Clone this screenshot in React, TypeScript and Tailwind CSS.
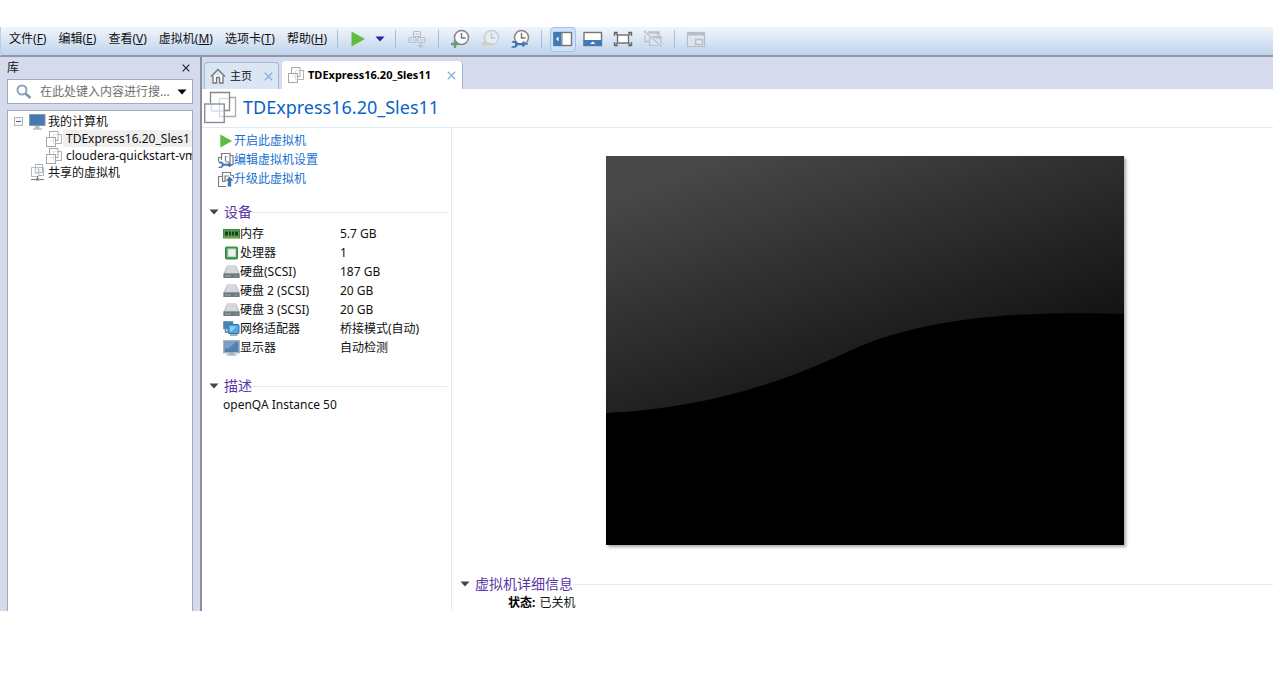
import type { ReactNode } from "react";

const menus = [
  { label: "文件", hotkey: "F" },
  { label: "编辑", hotkey: "E" },
  { label: "查看", hotkey: "V" },
  { label: "虚拟机", hotkey: "M" },
  { label: "选项卡", hotkey: "T" },
  { label: "帮助", hotkey: "H" },
];

/* ---------- Icons ---------- */

function PlayIcon({ size = 16 }: { size?: number }) {
  return (
    <svg width={size} height={size} viewBox="0 0 16 16">
      <path d="M1.5 0.5 15 8 1.5 15.5Z" fill="#5ebd3e" />
    </svg>
  );
}

function CaretIcon({ color }: { color: string }) {
  return (
    <svg width="10" height="6" viewBox="0 0 10 6">
      <path d="M0.5 0.5h9L5 5.5Z" fill={color} />
    </svg>
  );
}

function CloseIcon({ color, size = 9 }: { color: string; size?: number }) {
  return (
    <svg width={size} height={size} viewBox="0 0 9 9">
      <path d="M0.8 0.8 8.2 8.2M8.2 0.8 0.8 8.2" stroke={color} strokeWidth="1.3" fill="none" />
    </svg>
  );
}

// Three overlapping squares, used for every virtual machine
function VmIcon() {
  return (
    <svg width="16" height="16" viewBox="0 0 16 16" fill="none" className="shrink-0">
      <path d="M12 3.5h3.500v9H10" stroke="#adb1b5" />
      <path d="M3.500 6V0.500h8.500V9.500H10" stroke="#a6a6a6" />
      <rect x="0.500" y="6.500" width="9" height="9" stroke="#a6a6a6" />
      <path d="M7.500 6V3.500h4M4 9.500h5M7.500 7v5.500h2" stroke="#d5e4f1" />
    </svg>
  );
}

function LargeVmIcon() {
  return (
    <svg width="33" height="33" viewBox="0 0 33 33" fill="none" className="shrink-0">
      <path d="M15.500 13V7.500h10M7.500 20h12.500M15.500 13v12.500h4.500M7.500 13v7.500" stroke="#cfe0ef" strokeWidth="1.400" />
      <path d="M26 6.500h5.500v19H21" stroke="#a9adb1" strokeWidth="1.300" />
      <path d="M6.500 12V1.500h19V19.500H21" stroke="#858585" strokeWidth="1.300" />
      <rect x="0.750" y="13" width="19.500" height="18.500" stroke="#858585" strokeWidth="1.300" />
    </svg>
  );
}

function SendKeysIcon() {
  return (
    <svg width="18" height="19" viewBox="0 0 18 19" fill="none" stroke="#b5bfca" strokeWidth="1.2">
      <rect x="5.500" y="1.500" width="7" height="5" rx="1" />
      <rect x="1" y="7.500" width="7" height="5" rx="1" />
      <rect x="10" y="7.500" width="7" height="5" rx="1" />
      <path d="M7.500 4h3M3 10h3M12 10h3" />
      <path d="M12.500 12v5.500M10 15l2.500 2.500L15 15" />
    </svg>
  );
}

function ClockIcon({ faded = false, children }: { faded?: boolean; children: ReactNode }) {
  return (
    <svg width="20" height="20" viewBox="0 0 20 20" fill="none">
      <circle
        cx="11.500"
        cy="8.500"
        r="7"
        fill={faded ? "#e6edf5" : "#fbfbfb"}
        stroke={faded ? "#c9cfd6" : "#858585"}
        strokeWidth="1.500"
      />
      <path d="M11.500 4v5H15.500" stroke={faded ? "#c0c7cf" : "#757575"} strokeWidth="1.400" />
      {children}
    </svg>
  );
}

function SidebarPaneIcon() {
  return (
    <svg width="20" height="16" viewBox="0 0 20 16">
      <rect x="1" y="1.500" width="17.500" height="13" fill="#fff" stroke="#767676" strokeWidth="1.400" />
      <path d="M0.500 1h8v14h-8z" fill="#417bb5" />
      <path d="M5.500 5.500v5L3 8Z" fill="#fff" />
      <path d="M9 1v14" stroke="#767676" />
    </svg>
  );
}

function ThumbnailPaneIcon() {
  return (
    <svg width="20" height="16" viewBox="0 0 20 16">
      <rect x="1" y="1.500" width="17.500" height="13" fill="#fff" stroke="#767676" strokeWidth="1.400" />
      <path d="M0.500 9h18.500v6H0.500z" fill="#417bb5" />
      <path d="M7 13h5.500l-2.750-2.500Z" fill="#fff" />
    </svg>
  );
}

function FullScreenIcon() {
  return (
    <svg width="20" height="16" viewBox="0 0 20 16" fill="none" stroke="#6e6e6e" strokeWidth="1.400">
      <rect x="4.500" y="4" width="11" height="8" fill="#fff" />
      <path d="M1.500 5V1.500H5M15 1.500h3.500V5M18.500 11v3.500H15M5 14.500H1.500V11M1.500 1.500l3 2.500M18.500 1.500l-3 2.500M18.500 14.500l-3-2.500M1.500 14.500l3-2.500" />
    </svg>
  );
}

function UnityIcon() {
  return (
    <svg width="20" height="18" viewBox="0 0 20 18" fill="none" stroke="#b9c2cc" strokeWidth="1.300">
      <path d="M5 2.500h10.500v3" strokeWidth="2.500" />
      <path d="M2 5v6.500h5" />
      <rect x="6.500" y="6.500" width="11.500" height="9" fill="#dbe5ef" />
      <path d="M6.500 7.500h11.500" strokeWidth="2" />
      <path d="M1 1l18 16" stroke="#dfe8f2" strokeWidth="3" />
      <path d="M1 1l18 16" />
    </svg>
  );
}

function ConsoleViewIcon() {
  return (
    <svg width="20" height="17" viewBox="0 0 20 17" fill="none" stroke="#b5bec9">
      <rect x="1.500" y="1.500" width="17" height="14" fill="#e1e9f2" strokeWidth="1.200" />
      <path d="M1.500 3h17" strokeWidth="3" />
      <path d="M3.500 7.500H7M3.500 10H7M3.500 12.500H7" stroke="#d8d6c6" />
      <rect x="9.500" y="8.500" width="7" height="5" strokeWidth="1.500" />
    </svg>
  );
}

function SearchIcon() {
  return (
    <svg width="16" height="16" viewBox="0 0 16 16" fill="none" className="shrink-0">
      <circle cx="6" cy="6" r="4.500" stroke="#8aa3c0" strokeWidth="2" />
      <path d="M9.500 9.500l5 4.500" stroke="#7d95b3" strokeWidth="2.600" />
    </svg>
  );
}

function ComputerIcon() {
  return (
    <svg width="17" height="16" viewBox="0 0 17 16" className="shrink-0">
      <rect x="0.500" y="0.500" width="15.500" height="11" fill="#437bb4" stroke="#8f979e" />
      <path d="M6 12h4.500v2.500H6z" fill="#b9bdc1" />
      <path d="M4 15h9" stroke="#9b9b9b" />
    </svg>
  );
}

function SharedVmsIcon() {
  return (
    <svg width="16" height="17" viewBox="0 0 16 17" fill="none" className="shrink-0">
      <rect x="5.500" y="0.500" width="7" height="8" stroke="#b3b3b3" />
      <path d="M1.500 3.500h7v9h-7zM8.500 3.500h5v8h-5" stroke="#b3b8bd" />
      <path d="M5 5h5v5H5z" stroke="#cfe0ef" />
      <path d="M7.500 12v3M1 15.500h4M10 15.500h4" stroke="#777" />
      <path d="M5.500 14.500h4v2h-4z" fill="#777" />
    </svg>
  );
}

function HomeIcon() {
  return (
    <svg width="16" height="16" viewBox="0 0 16 16" fill="none" stroke="#757575" strokeWidth="1.300">
      <path d="M1 8.500 8 1.500l7 7" />
      <path d="M3 7.500V15h3.500V9.500h3V15H13V7.500" fill="#fff" />
    </svg>
  );
}

function EditVmIcon() {
  return (
    <svg width="17" height="16" viewBox="0 0 17 16" fill="none">
      <path d="M4.500 8V1.500h8.500M13 1v9H9M13 3.500h3v9h-3M4.500 5.500H1.500V9M8.500 4v5.500" stroke="#7b7b7b" strokeWidth="1.200" />
      <path d="M9 4.500h4" stroke="#bcd0e2" />
      <path
        d="M1 9.500h3.500c1 .5 1.800 1.200 2.200 2.300H11c.5-1 1.500-1.600 2.500-1.600v2.200h2v1.400h-2V15c-1.200 0-2.200-.400-2.700-1.300H6.700c-.4 1-1.200 1.800-2.200 2.300H1l1.500-1.500h2v-3h-2Z"
        fill="#3f78b3"
      />
    </svg>
  );
}

function UpgradeVmIcon() {
  return (
    <svg width="16" height="16" viewBox="0 0 16 16" fill="none">
      <path d="M4.500 6V1.500h8V4M12.500 4.500h3v3M4.500 5.500h-4v10H8M4.500 5.500v5H7V5h4" stroke="#7b7b7b" strokeWidth="1.200" />
      <path d="M11.500 5.500 7.500 9.800h2.300V15.500h3.400V9.800h2.300Z" fill="#3f78b3" />
    </svg>
  );
}

function MemoryIcon() {
  return (
    <svg width="17" height="16" viewBox="0 0 17 16">
      <rect x="0.500" y="3.500" width="16" height="8.500" fill="#55a04c" stroke="#3f8d45" />
      <path d="M2 5.500h3v4H2zM6 5.500h2v4H6zM9 5.500h2v4H9zM12 5.500h3v4h-3z" fill="#26382a" />
      <path d="M1.500 12h14" stroke="#d9b65c" strokeDasharray="2 1" />
    </svg>
  );
}

function CpuIcon() {
  return (
    <svg width="17" height="16" viewBox="0 0 17 16">
      <rect x="2.500" y="2" width="12" height="12" rx="1" fill="#3fa052" stroke="#2e8a43" />
      <rect x="5" y="4" width="7.500" height="7.500" fill="#eef1ee" stroke="#c4d6c7" />
    </svg>
  );
}

function DiskIcon() {
  return (
    <svg width="17" height="16" viewBox="0 0 17 16">
      <path d="M4 1.500h9L16.500 9.500v4.500H0.500V9.500Z" fill="#b5babf" />
      <path d="M4.500 2h8l2.500 7H2Z" fill="#d5d9dd" />
      <path d="M0.500 9.500h16v4.500H0.500z" fill="#70777e" />
      <path d="M2 12h6" stroke="#a9afb5" />
      <path d="M11.500 12h3" stroke="#5fb661" strokeWidth="1.500" />
    </svg>
  );
}

function NetworkIcon() {
  return (
    <svg width="17" height="16" viewBox="0 0 17 16">
      <rect x="0.750" y="0.750" width="9" height="7" fill="#3f86c6" stroke="#5f7f9d" />
      <path d="M2.500 8v3h3" fill="none" stroke="#6c8298" strokeWidth="1.500" />
      <rect x="5" y="3.500" width="11" height="9" rx="1" fill="#49a8ea" stroke="#476f96" />
      <path d="M7 5.500h6.500l-5 5H7z" fill="#90d0f7" />
      <path d="M7 14h7.500" stroke="#8a96a3" strokeWidth="1.500" />
    </svg>
  );
}

function DisplayIcon() {
  return (
    <svg width="17" height="16" viewBox="0 0 17 16">
      <rect x="0.750" y="0.750" width="15.500" height="12" fill="#5480ae" stroke="#a9b5c1" strokeWidth="1.500" />
      <path d="M1.500 1.500h12l-8 7h-4z" fill="#7ba0c8" />
      <path d="M6 13h5v1.500H6z" fill="#9eaab5" />
      <path d="M3.500 15h10" stroke="#8b98a6" />
    </svg>
  );
}

/* ---------- Data ---------- */

const devices = [
  { name: "内存", value: "5.7 GB", icon: <MemoryIcon /> },
  { name: "处理器", value: "1", icon: <CpuIcon /> },
  { name: "硬盘(SCSI)", value: "187 GB", icon: <DiskIcon /> },
  { name: "硬盘 2 (SCSI)", value: "20 GB", icon: <DiskIcon /> },
  { name: "硬盘 3 (SCSI)", value: "20 GB", icon: <DiskIcon /> },
  { name: "网络适配器", value: "桥接模式(自动)", icon: <NetworkIcon /> },
  { name: "显示器", value: "自动检测", icon: <DisplayIcon /> },
];

const actions = [
  { label: "开启此虚拟机", icon: <PlayIcon size={14} /> },
  { label: "编辑虚拟机设置", icon: <EditVmIcon /> },
  { label: "升级此虚拟机", icon: <UpgradeVmIcon /> },
];

/* ---------- Pieces ---------- */

function ToolButton({ label, active, children }: { label: string; active?: boolean; children: ReactNode }) {
  return (
    <span className="w-[30px] flex justify-center">
      <button
        type="button"
        aria-label={label}
        className={
          active
            ? "w-[26px] h-[25px] flex items-center justify-center rounded-sm border border-[#9fc3ec] bg-[#cfe2f8]"
            : "w-[26px] h-[25px] flex items-center justify-center"
        }
      >
        {children}
      </button>
    </span>
  );
}

function Separator() {
  return <span className="w-px h-[18px] mx-1.5 bg-[#a3bedb]" />;
}

function SectionTitle({ children }: { children: ReactNode }) {
  return (
    <h2 className="flex items-center h-5 text-sm text-[#5a35a5]">
      <button type="button" className="flex items-center gap-[5px]">
        <CaretIcon color="#444444" />
        {children}
      </button>
      <span className="flex-1 h-px bg-[#e8e8e8]" />
    </h2>
  );
}

function MenuBar() {
  return (
    <header className="flex items-center h-[30px] shrink-0 border-l border-b-2 border-l-[#b5d0ea] border-b-[#9399a3] bg-linear-to-b from-[#f1f6fb] to-[#bfd3ec] pb-1">
      <nav className="flex items-center gap-3 w-[330px] pl-2">
        {menus.map((menu) => (
          <button key={menu.hotkey} type="button" className="whitespace-nowrap">
            {menu.label}(<u>{menu.hotkey}</u>)
          </button>
        ))}
      </nav>
      <Separator />
      <button type="button" aria-label="开启" className="w-[27px] flex justify-center">
        <PlayIcon />
      </button>
      <button type="button" aria-label="电源选项" className="w-[18px] flex justify-center">
        <CaretIcon color="#1b2aa0" />
      </button>
      <Separator />
      <ToolButton label="发送按键">
        <SendKeysIcon />
      </ToolButton>
      <Separator />
      <ToolButton label="拍摄快照">
        <ClockIcon>
          <path d="M5 11v8M1 15h8" stroke="#6f9a7c" strokeWidth="2.400" />
        </ClockIcon>
      </ToolButton>
      <ToolButton label="恢复快照">
        <ClockIcon faded>
          <path d="M1 15l4-3.500v2.300h7v2.400H5v2.300Z" fill="#dccab8" />
        </ClockIcon>
      </ToolButton>
      <ToolButton label="管理快照">
        <ClockIcon>
          <path
            d="M2 12h3.500c1 .4 1.800 1 2.200 2h4c.6-1.200 1.800-1.800 3-1.800v2h3.300v1.600h-3.300v2c-1.300 0-2.500-.600-3-1.600h-4c-.4 1.200-1.200 2-2.200 2.500H1l1.500-1.700H5v-3H2.500Z"
            fill="#3f78b3"
          />
        </ClockIcon>
      </ToolButton>
      <Separator />
      <ToolButton label="显示库" active>
        <SidebarPaneIcon />
      </ToolButton>
      <ToolButton label="缩略图栏">
        <ThumbnailPaneIcon />
      </ToolButton>
      <ToolButton label="全屏">
        <FullScreenIcon />
      </ToolButton>
      <ToolButton label="Unity">
        <UnityIcon />
      </ToolButton>
      <Separator />
      <ToolButton label="控制台视图">
        <ConsoleViewIcon />
      </ToolButton>
    </header>
  );
}

function Library() {
  return (
    <aside className="flex flex-col w-[200px] shrink-0 px-[7px] bg-[#d5daed]">
      <div className="flex items-center justify-between h-[22px] pr-[3px]">
        <h2>库</h2>
        <button type="button" aria-label="关闭库">
          <CloseIcon color="#222222" size={8} />
        </button>
      </div>
      <div className="flex items-center h-[25px] shrink-0 border border-[#a4aab8] bg-white pl-2 pr-[5px]">
        <SearchIcon />
        <input
          type="text"
          aria-label="搜索"
          placeholder="在此处键入内容进行搜..."
          className="flex-1 min-w-0 pl-2 outline-none placeholder:text-[#6e6e6e]"
        />
        <button type="button" aria-label="筛选">
          <CaretIcon color="#000000" />
        </button>
      </div>
      <div className="flex-1 min-h-0 mt-1.5 border border-b-0 border-[#a4aab8] bg-white overflow-hidden">
        <ul className="pt-0.5">
          <li>
            <div className="flex items-center h-[17px] pl-1.5">
              <button
                type="button"
                aria-label="折叠"
                className="w-[9px] h-[9px] mr-1.5 flex items-center justify-center border border-[#b5b5b5] bg-[#f6f6f6]"
              >
                <span className="w-[5px] h-px bg-[#4a62a8]" />
              </button>
              <ComputerIcon />
              <span className="pl-0.5">我的计算机</span>
            </div>
            <ul>
              <li className="flex items-center gap-px h-[17px] pl-[38px]">
                <VmIcon />
                <span className="flex-1 pl-[3px] leading-[17px] whitespace-nowrap bg-[#efefef]">
                  TDExpress16.20_Sles1
                </span>
              </li>
              <li className="flex items-center gap-px h-[17px] pl-[38px]">
                <VmIcon />
                <span className="flex-1 pl-[3px] leading-[17px] whitespace-nowrap overflow-hidden">
                  cloudera-quickstart-vm
                </span>
              </li>
            </ul>
          </li>
          <li className="flex items-center h-[17px] pl-[22px]">
            <SharedVmsIcon />
            <span className="pl-0.5">共享的虚拟机</span>
          </li>
        </ul>
      </div>
    </aside>
  );
}

function Tabs() {
  return (
    <div className="flex items-end gap-[3px] h-8 shrink-0 pl-0.5 bg-[#d5daed]">
      <div className="flex items-center h-[27px] px-[5px] rounded-t-sm border border-b-0 border-[#9dbbd8] bg-[#dae6f4] text-[11px]">
        <button type="button" className="flex items-center gap-1">
          <HomeIcon />
          主页
        </button>
        <button type="button" aria-label="关闭主页" className="ml-3">
          <CloseIcon color="#8db0d2" />
        </button>
      </div>
      <div className="flex items-center h-7 px-1.5 rounded-t-sm border-r border-[#9dbbd8] bg-white">
        <button type="button" className="flex items-center gap-1 text-[11px] font-bold text-black">
          <VmIcon />
          TDExpress16.20_Sles11
        </button>
        <button type="button" aria-label="关闭标签页" className="ml-4">
          <CloseIcon color="#8db0d2" />
        </button>
      </div>
    </div>
  );
}

function Preview() {
  return (
    <svg viewBox="0 0 518 389" className="w-[518px] mx-auto shadow-[2px_2px_3px_rgba(0,0,0,0.35)]">
      <defs>
        <linearGradient id="glass" gradientUnits="userSpaceOnUse" x1="14" y1="38" x2="111" y2="305">
          <stop offset="0" stopColor="#484848" />
          <stop offset="1" stopColor="#131313" />
        </linearGradient>
      </defs>
      <rect width="518" height="389" fill="url(#glass)" />
      <path d="M0 257C90 253 170 230 239 197S400 154 518 158V389H0Z" fill="#000" />
    </svg>
  );
}

export default function App() {
  return (
    <div className="flex flex-col h-screen pt-[27px] pb-[69px] pr-[7px] bg-white text-xs text-[#111111] font-['Noto_Sans','Noto_Sans_CJK_SC',sans-serif]">
      <MenuBar />
      <div className="flex flex-1 min-h-0">
        <Library />
        <main className="flex flex-col flex-1 min-w-0 border-l-2 border-[#8d9098]">
          <Tabs />
          <div className="flex items-center gap-1.5 h-[39px] shrink-0 pl-0.5 pb-0.5 border-b border-[#dce9f6]">
            <LargeVmIcon />
            <h1 className="text-lg leading-6 text-[#0a64c4]">TDExpress16.20_Sles11</h1>
          </div>
          <div className="flex flex-1 min-h-0 overflow-hidden">
            <div className="w-[250px] shrink-0 pt-[3px] pl-[7px] pr-1 border-r border-[#e1eaf4]">
              <ul className="pl-2">
                {actions.map((action) => (
                  <li key={action.label} className="h-[19px]">
                    <a href="#" className="flex items-center h-full text-[#1a6fd0]">
                      <span className="w-[17px] flex justify-center">{action.icon}</span>
                      {action.label}
                    </a>
                  </li>
                ))}
              </ul>

              <section className="mt-[14px]">
                <SectionTitle>设备</SectionTitle>
                <table className="mt-0.5 ml-[14px]">
                  <tbody>
                    {devices.map((device) => (
                      <tr key={device.name} className="h-[19px]">
                        <th scope="row" className="w-[117px] p-0 font-normal text-left leading-[19px]">
                          <span className="flex items-center whitespace-nowrap">
                            {device.icon}
                            {device.name}
                          </span>
                        </th>
                        <td className="p-0 leading-[19px] whitespace-nowrap">{device.value}</td>
                      </tr>
                    ))}
                  </tbody>
                </table>
              </section>

              <section className="mt-[19px]">
                <SectionTitle>描述</SectionTitle>
                <p className="pl-[14px] leading-[18px]">openQA Instance 50</p>
              </section>
            </div>

            <div className="flex-1 min-w-0 pt-7 pl-2">
              <div className="pr-1">
                <Preview />
              </div>
              <section className="mt-[29px]">
                <SectionTitle>虚拟机详细信息</SectionTitle>
                <dl className="flex gap-1 pl-12 leading-[18px]">
                  <dt className="font-bold text-black">状态:</dt>
                  <dd>已关机</dd>
                </dl>
              </section>
            </div>
          </div>
        </main>
      </div>
    </div>
  );
}
